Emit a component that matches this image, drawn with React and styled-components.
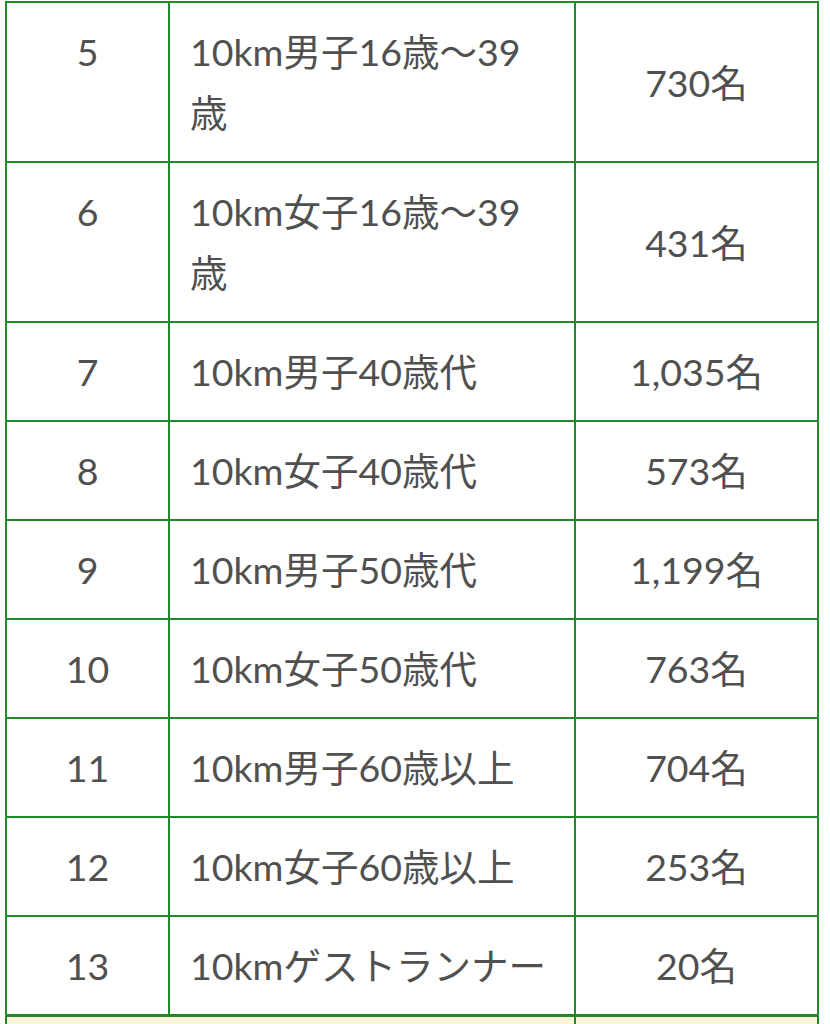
import React from "react";
import styled, { createGlobalStyle } from "styled-components";

const GlobalStyle = createGlobalStyle`
  html, body {
    margin: 0;
    padding: 0;
    background: #ffffff;
  }
  body {
    font-family: "Lato", "Noto Sans CJK JP", sans-serif;
    color: #505050;
  }
`;

const Page = styled.div`
  padding: 1px 13px 0 5px;
  overflow: hidden;
  height: 1024px;
  box-sizing: border-box;
`;

const Table = styled.table`
  width: 812px;
  border-collapse: collapse;
  table-layout: fixed;
  font-size: 37.5px;
  line-height: 61px;
`;

const Cell = styled.td`
  border: 2px solid #21892b;
  padding: 18px 22px 18px 20px;
  text-align: ${(p) => (p.$align === "left" ? "left" : "center")};
  vertical-align: ${(p) => (p.$valign === "top" ? "top" : "middle")};
  ${(p) => p.$num && "padding-left: 10px; padding-right: 10px;"}
`;

const FootRow = styled.tr`
  background: #fdf5d8;
  height: 99px;

  td {
    border-top-width: 3px;
  }
`;

const rows = [
  { no: 5, name: "10km男子16歳〜39歳", count: "730名" },
  { no: 6, name: "10km女子16歳〜39歳", count: "431名" },
  { no: 7, name: "10km男子40歳代", count: "1,035名" },
  { no: 8, name: "10km女子40歳代", count: "573名" },
  { no: 9, name: "10km男子50歳代", count: "1,199名" },
  { no: 10, name: "10km女子50歳代", count: "763名" },
  { no: 11, name: "10km男子60歳以上", count: "704名" },
  { no: 12, name: "10km女子60歳以上", count: "253名" },
  { no: 13, name: "10kmゲストランナー", count: "20名" },
];

export default function App() {
  return (
    <Page>
      <GlobalStyle />
      <Table>
        <colgroup>
          <col style={{ width: 163 }} />
          <col style={{ width: 406 }} />
          <col style={{ width: 243 }} />
        </colgroup>
        <tbody>
          {rows.map((r) => (
            <tr key={r.no}>
              <Cell $valign="top" $num>
                {r.no}
              </Cell>
              <Cell $align="left" $valign="top">
                {r.name}
              </Cell>
              <Cell $num>{r.count}</Cell>
            </tr>
          ))}
        </tbody>
        <tfoot>
          <FootRow>
            <Cell colSpan={2} $num />
            <Cell $num />
          </FootRow>
        </tfoot>
      </Table>
    </Page>
  );
}
